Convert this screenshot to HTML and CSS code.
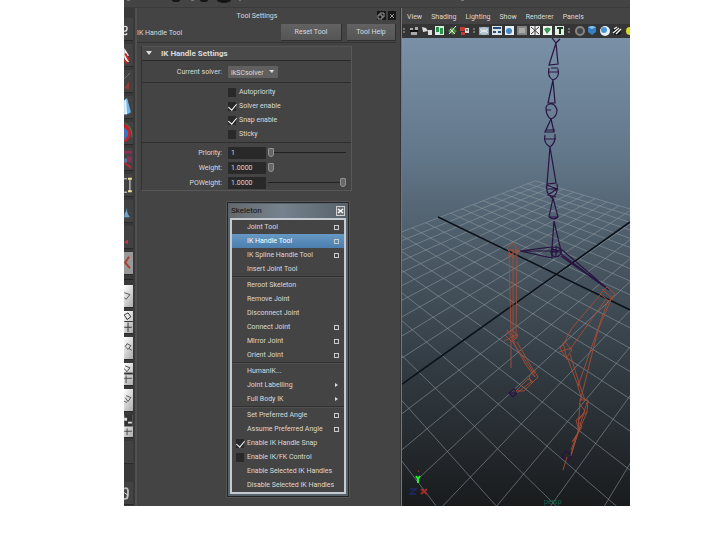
FILE: index.html
```html
<!DOCTYPE html>
<html lang="en">
<head>
<meta charset="utf-8">
<title>Tool Settings</title>
<link rel="stylesheet" href="styles.css">
</head>
<body>
<main class="app">
  <div class="topbar">
    <svg width="350" height="8" viewBox="124 0 350 8" aria-hidden="true"><g fill="#151515"><ellipse cx="176" cy="0" rx="4" ry="2"/><ellipse cx="204" cy="0" rx="4" ry="2"/><ellipse cx="224" cy="0" rx="7" ry="3"/></g><path d="M127 0h3M191 0h3M239 0h2M461 0h3" stroke="#aaa"/></svg>
  </div>
  <div class="workspace">
    <nav class="toolbox" aria-label="Tools">
      <button aria-label="Lasso"><svg viewBox="0 0 9 23"><path d="M0 9Q3 8 3 11T0 14M0 17q2 1 3-1" fill="none" stroke="#ddd" stroke-width="1.5"/></svg></button>
      <button aria-label="Select"><svg viewBox="0 0 9 23"><path d="M0 4l5 8-2 1 2 6-3-1-2-4z" fill="#eee"/><path d="M1 10l4 7M0 17l3 3" stroke="#c22" stroke-width="2"/></svg></button>
      <button aria-label="Paint select"><svg viewBox="0 0 9 23"><path d="M0 9Q4 6 6 3" fill="none" stroke="#777"/><path d="M0 19l5-7v8z" fill="#943b35"/></svg></button>
      <button aria-label="Move"><svg viewBox="0 0 9 23"><path d="M0 5l3-3 4 15q-3 3-7 2z" fill="#6db5e8"/><path d="M0 5l2-2 1 16H0z" fill="#def2fc"/></svg></button>
      <button aria-label="Rotate"><svg viewBox="0 0 9 23"><path d="M0 2q8 2 7 10t-7 9z" fill="#c5202b"/><path d="M0 6q5 3 4 8l-4 5z" fill="#3278c0"/><path d="M1 1q8 5 7 15" fill="none" stroke="#3c8b4c"/></svg></button>
      <button aria-label="Scale"><svg viewBox="0 0 9 23"><path d="M0 3h8v3H0zM3 9h5v6H3z" fill="#8c2f53"/><path d="M0 15l7 6" stroke="#b52836" stroke-width="2"/><path d="M0 11h3v4H0z" fill="#5376a5"/></svg></button>
      <button aria-label="Manipulator"><svg viewBox="0 0 9 23"><path d="M0 5h3M0 19h3M6 6v12" fill="none" stroke="#eee"/><path d="M4 4h4v2H4zM4 17h4v2H4z" fill="#eee6a0"/></svg></button>
      <button aria-label="Soft modification"><svg viewBox="0 0 9 23"><path d="M0 18l1-6 1 1V8l2 7 2 3z" fill="#68a6d0"/></svg></button>
      <button aria-label="Show manipulator"><svg viewBox="0 0 9 23"><path d="M0 17l4-3v5z" fill="#c43445"/></svg></button>
      <button class="active" aria-label="IK handle"><svg viewBox="0 0 9 23"><path d="M5 5L1 11l5 6" fill="none" stroke="#a63f30" stroke-width="2"/></svg></button>
      <hr>
      <button class="layout" aria-label="Single view"><svg viewBox="0 0 9 23"><path d="M0 8l6 2-4 5-2-2" fill="none" stroke="#555"/></svg></button>
      <button class="layout" aria-label="Four view"><svg viewBox="0 0 9 23"><path d="M0 11h9M0 17h8M4 12v10" stroke="#333"/><path d="M0 4l4-2 3 4-4 3z" fill="none" stroke="#333"/></svg></button>
      <button class="layout" aria-label="Outliner view"><svg viewBox="0 0 9 23"><path d="M3 7l4 2-3 4-3-3zM5 12l3 2" fill="none" stroke="#555"/></svg></button>
      <button class="layout" aria-label="Split view"><svg viewBox="0 0 9 23"><path d="M0 11h9" stroke="#333" stroke-width="2"/><path d="M1 3l5 2-3 4-3-3M0 16h8M2 13v8" fill="none" stroke="#444"/></svg></button>
      <button class="layout" aria-label="Perspective view"><svg viewBox="0 0 9 23"><path d="M2 7l5 2-3 4-3-4M0 13l3 1" fill="none" stroke="#555"/></svg></button>
      <button class="layout" aria-label="Graph view"><svg viewBox="0 0 9 23"><path d="M0 0h9v12H0z" fill="#333"/><path d="M0 3h3v3H0M4 7h4v2H4" fill="#ddd"/><path d="M0 17h8M3 14v7" stroke="#444"/></svg></button>
      <button aria-label="More layouts"></button>
      <button class="last" aria-label="Help"><svg viewBox="0 0 9 23"><path d="M0 7q4-2 4 3t-1 7l-3 1" fill="none" stroke="#bbb" stroke-width="2"/><path d="M0 11l4 3" stroke="#ddd"/></svg></button>
    </nav>

    <section class="panel">
      <header class="panel-title"><h1>Tool Settings</h1>
        <svg width="19" height="9" viewBox="0 0 19 9" aria-hidden="true"><path d="M0 0h9v9H0zM11 0h8v9h-8z" fill="#171717"/><path d="M1 4h4v4H1zM3 4V2h4v4H5M13 3l4 4m0-4l-4 4" fill="none" stroke="#999"/></svg>
      </header>
      <div class="tool-row"><span class="tool-name">IK Handle Tool</span><button class="wide">Reset Tool</button><button>Tool Help</button></div>
      <form class="settings">
        <h2><svg width="8" height="5" viewBox="0 0 8 5" aria-hidden="true"><path d="M1 0h6L4 4z" fill="#ddd"/></svg>IK Handle Settings</h2>
        <div class="group row">
          <label for="solver">Current solver:</label>
          <span class="select"><select id="solver"><option>ikSCsolver</option></select><svg width="6" height="4" viewBox="0 0 6 4" aria-hidden="true"><path d="M0 0h5L3 3z" fill="#ddd"/></svg></span>
        </div>
        <div class="group checks">
          <label><input type="checkbox">Autopriority</label>
          <label><input type="checkbox" checked>Solver enable</label>
          <label><input type="checkbox" checked>Snap enable</label>
          <label><input type="checkbox">Sticky</label>
        </div>
        <div class="group fields">
          <div class="row"><label for="priority">Priority:</label><input id="priority" type="text" value="1"><input type="range" aria-label="Priority slider" value="0"></div>
          <div class="row"><label for="weight">Weight:</label><input id="weight" type="text" value="1.0000"><input class="short" type="range" aria-label="Weight slider" value="0"></div>
          <div class="row"><label for="poweight">POWeight:</label><input id="poweight" type="text" value="1.0000"><input type="range" aria-label="POWeight slider" value="100"></div>
        </div>
      </form>
    </section>

    <section class="viewport">
      <nav class="view-menu"><button>View</button><button>Shading</button><button>Lighting</button><button>Show</button><button>Renderer</button><button>Panels</button></nav>
      <div class="view-tools">
        <svg width="228" height="14" viewBox="402 24 228 14" role="img" aria-label="View tools">
          <path d="M402 24h228v14H402z" fill="#353535"/>
          <path d="M404 28v6M474 28v6M569 28v6" stroke="#aaa" stroke-dasharray="2 1"/>
          <path d="M410 28h3v2h-3zM415 27h3v3h-3zM411 32h6v3h-6z" fill="#aaa"/><path d="M410 31h8" stroke="#111" stroke-width="2"/>
          <path d="M422 27l4 1 2 3-5 1zM428 30h4v5h-4z" fill="#ddd"/>
          <path d="M435 26h9v9h-9z" fill="#dfeee2"/><path d="M436 27h3v5h-3zM440 28h3v6h-3z" fill="#299349"/>
          <path d="M448 31l4-4 5 4-4 4z" fill="#478b3a"/><path d="M449 34l7-8M450 29l5 5" stroke="#eee"/>
          <path d="M460 27h5v4h-5zM461 32h4v3h-4z" fill="#c23a32"/><path d="M465 28h4v5h-4z" fill="#ddd"/><path d="M466 30h2" stroke="#222"/>
          <path d="M479 27h10v8h-10z" fill="#8ea4b3"/><circle cx="484" cy="31" r="4" fill="#b2c5d0"/><path d="M480 29l4 3 4-3M480 33l4-3 4 3" fill="none" stroke="#e8eef2"/>
          <path d="M492 26h10v9h-10z" fill="#dce4e9"/><path d="M493 28h8M493 32h3m2 0h3" stroke="#244d78" stroke-width="2"/>
          <path d="M505 26h9v9h-9z" fill="#e7eef4"/><circle cx="509" cy="31" r="3" fill="#4288c7"/>
          <path d="M517 26h10v9h-10z" fill="#858585"/><path d="M519 28h6v5h-6z" fill="#aaa"/>
          <path d="M530 26h10v9h-10z" fill="#eee"/><path d="M531 27l8 7m0-7l-8 7M535 26v9" stroke="#444"/>
          <path d="M543 26h9v9h-9z" fill="#edf5ed"/><path d="M544 29q4-3 7 0l-4 5z" fill="#3b9b56"/>
          <path d="M555 26h9v9h-9z" fill="#e4f1e2"/><path d="M557 28h6M560 28v6" stroke="#163b22" stroke-width="2"/>
          <circle cx="580" cy="31" r="4" fill="#444" stroke="#858585" stroke-width="2"/>
          <path d="M588 27l4-1 4 1v5l-4 3-4-3z" fill="#367fc2"/><path d="M588 27l4-1 4 1-4 2z" fill="#87c5f3"/>
          <circle cx="605" cy="31" r="5" fill="#e7f1f8"/><circle cx="604" cy="30" r="3" fill="#4b94d2"/>
          <circle cx="617" cy="31" r="4" fill="#111"/><path d="M614 29l3-2m-4 6l6-5m-3 6l5-5" stroke="#eee" stroke-width="1.5"/>
          <circle cx="630" cy="31" r="4" fill="#d8dc24"/>
        </svg>
      </div>
      <svg class="scene" viewBox="402 38 228 468" preserveAspectRatio="xMidYMid slice" role="img" aria-label="Perspective view of a skeleton">
        <defs><linearGradient id="sky" x1="0" y1="0" x2="0" y2="1"><stop offset="0" stop-color="#7990a6"/><stop offset=".25" stop-color="#62778a"/><stop offset=".45" stop-color="#4b5a66"/><stop offset=".7" stop-color="#333c43"/><stop offset="1" stop-color="#191b1d"/></linearGradient></defs>
        <path d="M402 38h228v468H402z" fill="url(#sky)"/>
        <path id="floor" fill="none" stroke="#8b969d" stroke-opacity=".65" stroke-width=".9"/>
        <path d="M438 217L630 310M402 384L630 222" stroke="#0b1119" stroke-width="1.6"/>
        <g fill="none" stroke="#291443" stroke-width="1.2">
          <path d="M552 38l4 5 4-4M556 43l-7 22 9-1-2-21M549 65l9-1M549 72h10M551 68h7"/>
          <path d="M549 68q-2 9 4 12 7-2 5-11M553 80l-5 23h7l-2-23M546 108q0 8 5 11 6-2 6-9-2-7-7-6-4 1-4 4M546 110h5"/>
          <path d="M551 119l-6 13h9l-3-13M546 130h9M544 139h12M545 135q-2 8 5 12 6-4 5-13M550 147l-3 37 9-1-6-36"/>
          <path d="M547 185l10 4-9 6 8 2M547 189h11M547 184q-2 9 5 14 7-5 5-14M553 198l-4 19q5 4 9 0l-5-19M549 217h9M554 221l-2 28 9 2-7-30"/>
          <circle cx="556" cy="252" r="5"/><path d="M551 252h11M556 246v11M520 251l32-4v11zM520 251h38M561 249l48 41-48-34M561 254l48 36"/>
          <path d="M514 389l-5 4 4 4 5-5zM509 393h8M566 451l-4 6 6 4 4-6z"/>
        </g>
        <g fill="none" stroke="#a64d36" stroke-width=".9">
          <path d="M507 248l6-5 6 8-6 7zM508 256l10-6M509 252l2 82 5 5 1-89M513 249v92M508 250h10M505 335l7-5 6 6-6 6zM504 341l14-7M507 330l8 13M513 342l18 27 4 8-9-12zM511 339v29M517 342l18 31M529 377l5-7 4 7-6 6zM516 391l12-12 5 3-9 9zM517 393l15-12"/>
          <path d="M600 294l7-7 8 7-6 7zM602 289l11 10M601 294l-29 34-9 17M606 299l-37 52M612 297l-14 33-18 72M608 300l-30 86M560 348l5-6 7 8-6 8zM563 342l4 18M559 352l12-4M567 357l10 26 5 17M570 354l10 32 5 14M579 400h9l-1 12-9 21-7 21M587 402l-16 54M580 402l-2 30-7 18M579 403l6 8-7 10 4 6-9 14M587 412l-11 8 3 11-7 11M567 457l-4 13"/>
        </g>
        <path d="M416 476l2 3 2-3m-2 3v4" fill="none" stroke="#20ed30" stroke-width="2"/>
        <path d="M418 470l1 2" stroke="#9d3341"/><path d="M421 489l6 5m0-5l-6 5" stroke="#a72c28" stroke-width="2"/><path d="M410 489h6l-6 5h6" fill="none" stroke="#222868" stroke-width="1.5"/>
        <text x="544" y="504" class="camera">persp</text>
      </svg>
    </section>

    <aside class="skeleton">
      <header><h2>Skeleton</h2><button class="close" aria-label="Close"><svg width="7" height="8" viewBox="0 0 7 8"><path d="M1 2l5 4m0-4L1 6" stroke="#fff" stroke-width="1.5"/></svg></button></header>
      <ul>
        <li><button>Joint Tool<i class="box"></i></button></li>
        <li><button class="selected">IK Handle Tool<i class="box"></i></button></li>
        <li><button>IK Spline Handle Tool<i class="box"></i></button></li>
        <li><button>Insert Joint Tool</button></li>
        <li class="separator"></li>
        <li><button>Reroot Skeleton</button></li>
        <li><button>Remove Joint</button></li>
        <li><button>Disconnect Joint</button></li>
        <li><button>Connect Joint<i class="box"></i></button></li>
        <li><button>Mirror Joint<i class="box"></i></button></li>
        <li><button>Orient Joint<i class="box"></i></button></li>
        <li class="separator"></li>
        <li><button>HumanIK...</button></li>
        <li><button>Joint Labelling<i class="arrow"></i></button></li>
        <li><button>Full Body IK<i class="arrow"></i></button></li>
        <li class="separator"></li>
        <li><button>Set Preferred Angle<i class="box"></i></button></li>
        <li><button>Assume Preferred Angle<i class="box"></i></button></li>
        <li><label><input type="checkbox" checked>Enable IK Handle Snap</label></li>
        <li><label><input type="checkbox">Enable IK/FK Control</label></li>
        <li><button>Enable Selected IK Handles</button></li>
        <li><button>Disable Selected IK Handles</button></li>
      </ul>
    </aside>
  </div>
</main>
<script src="floor.js"></script>
</body>
</html>
```
FILE: floor.js
```js
// Ground grid in two-point perspective.
const origin = [557, 275];
const vanishA = [85, 47];
const vanishB = [880, 49];
const cells = 10;
const stepA = 0.0335;
const stepB = 0.0375;

function project(u, v) {
  const s = u * stepA;
  const t = v * stepB;
  const w = 1 + s + t;
  return [0, 1].map(i => ((origin[i] + s * vanishA[i] + t * vanishB[i]) / w).toFixed(1)).join(" ");
}

let lines = "";
for (let i = -cells; i <= cells; i++) {
  lines += `M${project(i, -cells)}L${project(i, cells)}`;
  lines += `M${project(-cells, i)}L${project(cells, i)}`;
}
document.getElementById("floor").setAttribute("d", lines);
```
FILE: styles.css
```css
* { box-sizing: border-box; }
body { margin: 0; padding: 0 90px 34px 124px; background: #fff; color: #dadada; font: 7px/14px "Roboto", "Liberation Sans", sans-serif; white-space: nowrap; }
h1, h2, ul { margin: 0; padding: 0; font: inherit; }
button, input, select { font: inherit; color: inherit; margin: 0; padding: 0; border: 0; background: none; }
svg { display: block; }

.app { display: flex; flex-direction: column; min-height: calc(100vh - 34px); background: #444; overflow: hidden; }
.topbar { height: 8px; border-bottom: 1px solid #3a3a3a; }
.workspace { position: relative; flex: 1; display: flex; }

.toolbox { width: 13px; flex: none; display: flex; flex-direction: column; gap: 3px; padding-top: 10px; background: #393939; border-right: 2px solid #505050; }
.toolbox button { width: 9px; height: 23px; background: #424242; border-bottom: 1px solid #292929; }
.toolbox svg { width: 9px; height: 22px; }
.toolbox hr { width: 9px; height: 1px; margin: 1px 0 2px; border: 0; background: #222; }
.toolbox .active { background: #999; }
.toolbox .layout { background: linear-gradient(120deg, #fff, #aaa); }
.toolbox .last { margin-top: 15px; }

.panel { width: 264px; flex: none; padding-right: 4px; border-right: 1px solid #333; }
.panel-title { display: flex; align-items: center; height: 15px; }
.panel-title h1 { flex: 1; text-align: center; }
.tool-row { display: flex; align-items: center; gap: 5px; height: 20px; border-bottom: 1px solid #333; }
.tool-name { flex: 1; }
.tool-row button { width: 49px; height: 17px; background: linear-gradient(#626262, #555); border-right: 1px solid #303030; border-bottom: 1px solid #303030; }
.tool-row .wide { width: 61px; }

.settings { width: 211px; margin: 3px 0 0 4px; border: 1px solid #585858; border-top: 0; border-left-color: #333; }
.settings h2 { display: flex; align-items: center; gap: 8px; height: 15px; padding-left: 3px; font-size: 8px; font-weight: bold; background: #494949; border-top: 1px solid #555; border-bottom: 1px solid #292929; }
.group { border-bottom: 1px solid #2e2e2e; }
.row { display: grid; grid-template-columns: 80px 38px 1fr; column-gap: 6px; align-items: center; height: 15px; }
.row label { text-align: right; }
.group.row { grid-template-columns: 80px 50px; height: 22px; }
.select { display: grid; align-items: center; }
.select > * { grid-area: 1 / 1; }
.select select { height: 12px; appearance: none; padding-left: 3px; background: #606060; border-radius: 1px; }
.select svg { justify-self: end; margin-right: 3px; }
.checks { padding: 2px 0 1px 86px; }
.checks label { display: flex; align-items: center; gap: 3px; height: 14px; }
input[type=checkbox] { appearance: none; width: 8px; height: 9px; background: #292929; display: grid; justify-content: center; }
input[type=checkbox]:checked::after { content: ""; width: 4px; height: 7px; border: solid #fff; border-width: 0 1px 1px 0; transform: rotate(40deg); }
.fields { padding: 2px 0 0; border: 0; }
input[type=text] { width: 38px; height: 12px; padding-left: 3px; background: #292929; }
input[type=range] { appearance: none; width: 78px; height: 11px; margin-left: -4px; background: linear-gradient(#222, #222) center / 100% 1px no-repeat; }
input[type=range].short { width: 6px; background: none; }
input[type=range]::-webkit-slider-thumb { appearance: none; width: 6px; height: 9px; background: #666; border: 1px solid #929292; border-radius: 1px 1px 3px 3px; }

.viewport { flex: 1; min-width: 0; display: flex; flex-direction: column; border-left: 1px solid #777; }
.view-menu { display: flex; gap: 9px; height: 16px; padding: 1px 0 0 5px; }
.view-tools { height: 14px; overflow: hidden; }
.scene { flex: 1; width: 100%; min-height: 0; }
.camera { fill: #12664b; font-size: 7px; }

.skeleton { position: absolute; left: 103px; top: 194px; width: 122px; padding: 1px 2px 2px; background: #59636b; border: 1px solid #252525; outline: 1px solid #555; }
.skeleton header { display: flex; align-items: center; justify-content: space-between; height: 14px; padding: 0 1px; background: linear-gradient(90deg, #65686c, #75838e 45%, #57616a); }
.skeleton h2 { font-size: 8px; color: #111; }
.skeleton .close { border: 1px solid #d0d0d0; background: #68727a; }
.skeleton ul { list-style: none; border: 2px solid #c5cbd0; background: #444; }
.skeleton li button, .skeleton li label { display: flex; align-items: center; width: 100%; height: 14px; padding: 0 5px 0 15px; text-align: left; }
.skeleton .selected { background: linear-gradient(#6699c5, #4c7eae); color: #fff; }
.skeleton li label { padding-left: 4px; gap: 3px; }
.skeleton .separator { height: 2px; border-top: 1px solid #303030; border-bottom: 1px solid #505050; }
.box { width: 5px; height: 5px; margin-left: auto; border: 1px solid #ccc; }
.arrow { margin: 0 1px 0 auto; border: 2px solid transparent; border-left: 3px solid #ddd; border-right: 0; }
```
